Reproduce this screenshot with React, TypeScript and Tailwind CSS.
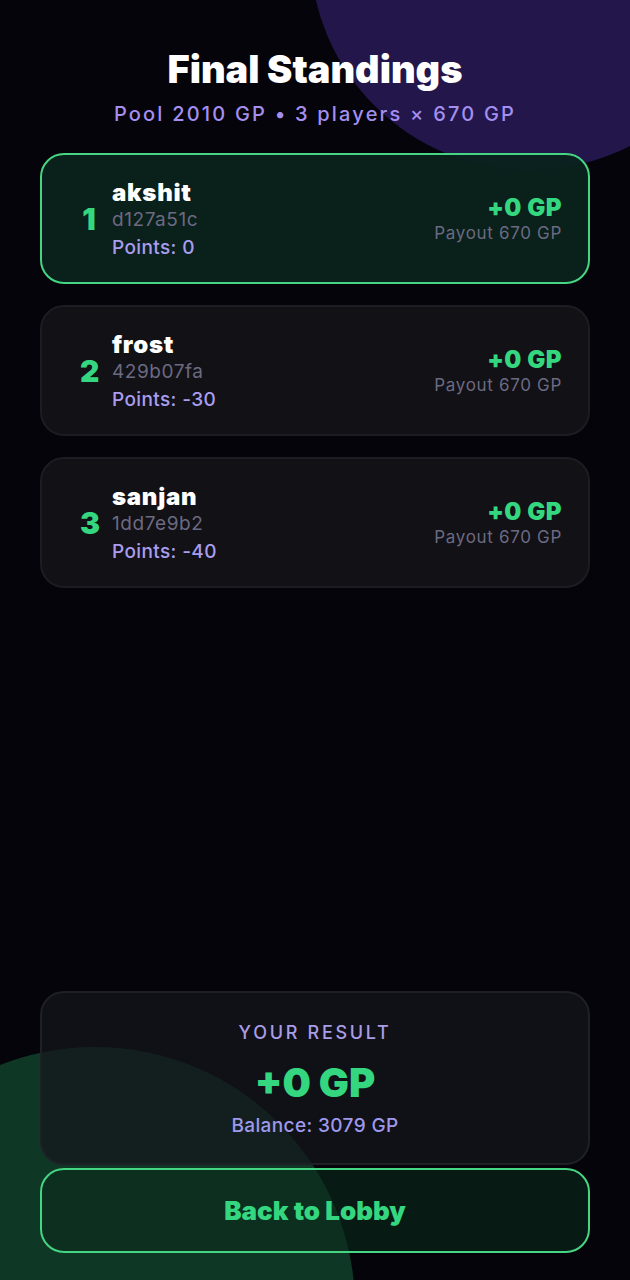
import React from "react";

interface Standing {
  rank: number;
  name: string;
  hash: string;
  points: number;
  delta: string;
  payout: number;
}

const standings: Standing[] = [
  { rank: 1, name: "akshit", hash: "d127a51c", points: 0, delta: "+0 GP", payout: 670 },
  { rank: 2, name: "frost", hash: "429b07fa", points: -30, delta: "+0 GP", payout: 670 },
  { rank: 3, name: "sanjan", hash: "1dd7e9b2", points: -40, delta: "+0 GP", payout: 670 },
];

const StandingCard = ({ s, winner }: { s: Standing; winner: boolean }) => (
  <div
    className={
      winner
        ? "flex items-center rounded-[24px] border-2 border-[#46d683] bg-[#0a221c]/95 pb-[22px] pl-[38px] pr-[26px] pt-[23px]"
        : "flex items-center rounded-[24px] border-2 border-[#1c1c22] bg-[#111116] pb-[22px] pl-[38px] pr-[26px] pt-[23px]"
    }
  >
    <div className="w-[18px] text-center text-[30px] font-black leading-none text-[#34d77f]">{s.rank}</div>
    <div className="ml-[14px] flex flex-col">
      <span className="text-[24px] font-black leading-[30px] tracking-[0.03em] text-white">{s.name}</span>
      <span className="text-[19px] leading-[24px] tracking-[0.03em] text-[#6c6a82]">{s.hash}</span>
      <span className="mt-[4px] text-[19px] font-medium leading-[24px] tracking-[0.02em] text-[#a99df0]">
        Points: {s.points}
      </span>
    </div>
    <div className="ml-auto flex flex-col items-end">
      <span className="text-[24px] font-black leading-[28px] tracking-[0.02em] text-[#34d77f]">{s.delta}</span>
      <span className="text-[17px] leading-[22px] tracking-[0.04em] text-[#6c6a82]">Payout {s.payout} GP</span>
    </div>
  </div>
);

export default function App() {
  return (
    <div
      className="relative flex h-[1280px] w-full flex-col overflow-hidden bg-[#05040a] px-[40px]"
      style={{ fontFamily: "Inter, 'Noto Sans', sans-serif" }}
    >
      <div className="pointer-events-none absolute left-[310px] top-[-270px] h-[440px] w-[440px] rounded-full bg-[#23164b]" />
      <div className="pointer-events-none absolute left-[-165px] top-[1047px] h-[520px] w-[520px] rounded-full bg-[#0f3726]" />

      <div className="relative mt-[46px] flex flex-col items-center">
        <h1 className="text-[38px] font-black leading-[46px] text-white">Final Standings</h1>
        <p className="mt-[9px] text-[20px] font-medium leading-[26px] tracking-[0.11em] text-[#a48ff0]">
          Pool 2010 GP • 3 players × 670 GP
        </p>
      </div>

      <div className="relative mt-[26px] flex flex-col gap-[21px]">
        {standings.map((s, i) => (
          <StandingCard key={s.hash} s={s} winner={i === 0} />
        ))}
      </div>

      <div className="flex-1" />

      <div className="relative flex flex-col items-center rounded-[24px] border-2 border-[#1f1f26] bg-[#15151c]/70 pb-[25px] pt-[28px]">
        <span className="text-[18px] font-medium leading-[24px] tracking-[0.15em] text-[#a99de6]">YOUR RESULT</span>
        <span className="mt-[14px] text-[40px] font-black leading-[48px] text-[#34d77f]">+0 GP</span>
        <span className="mt-[7px] text-[19px] font-medium leading-[24px] tracking-[0.02em] text-[#9e99ec]">
          Balance: 3079 GP
        </span>
      </div>

      <button className="relative mb-[27px] mt-[3px] flex h-[85px] items-center justify-center rounded-[24px] border-2 border-[#46d683] bg-[#0a2a1a]/60">
        <span className="text-[26px] font-black text-[#34d77f]">Back to Lobby</span>
      </button>
    </div>
  );
}
